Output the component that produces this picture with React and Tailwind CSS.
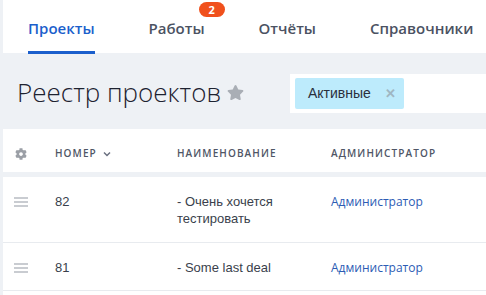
import React from "react";
import { FaStar, FaCog } from "react-icons/fa";

const tabs = [
  { label: "Проекты", active: true },
  { label: "Работы", badge: "2" },
  { label: "Отчёты" },
  { label: "Справочники" },
];

function Burger() {
  return (
    <div className="flex flex-col gap-[2px] w-[14px] pt-[4px]">
      <div className="h-[2px] bg-[#c9ccd1]" />
      <div className="h-[2px] bg-[#c9ccd1]" />
      <div className="h-[2px] bg-[#c9ccd1]" />
    </div>
  );
}

const arial = { fontFamily: '"Liberation Sans", Arial, sans-serif' };

export default function App() {
  return (
    <div className="w-[486px] h-[295px] overflow-hidden bg-[#eef1f5] pl-[3px]" style={{ fontFamily: '"Open Sans", sans-serif' }}>
      {/* tabs */}
      <div className="bg-white h-[53px] flex items-stretch pl-[25px] gap-[54px]">
        {tabs.map((t) => (
          <div key={t.label} className="relative flex flex-col justify-end">
            <div
              className={`text-[15px] font-semibold leading-[20px] pb-[13px] whitespace-nowrap ${
                t.active ? "text-[#1b5fcc]" : "text-[#4b5262]"
              }`}
            >
              {t.label}
            </div>
            {t.active ? <div className="h-[3px] bg-[#1b5fcc] mb-[-1px]" /> : <div className="h-[2px]" />}
            {t.badge && (
              <div className="absolute left-[50px] top-[2px] w-[26px] h-[15px] rounded-full bg-[#f0501c] text-white text-[11px] font-bold leading-[15px] text-center">
                {t.badge}
              </div>
            )}
          </div>
        ))}
      </div>

      {/* title row */}
      <div className="h-[76px] flex items-center">
        <div className="flex items-center pl-[14px] w-[287px]">
          <span className="text-[26px] font-light text-[#1d2230] leading-[34px] mt-[2px]">Реестр проектов</span>
          <FaStar className="ml-[6px] text-[#a9aeb5] w-[17px] h-[17px] mt-[2px]" />
        </div>
        <div className="flex-1 bg-white h-[39px] mt-[4px] flex items-center pl-[5px]">
          <div className="h-[31px] w-[109px] bg-[#bdebfc] rounded-[2px] flex items-center pl-[13px] pr-[8px] justify-between" style={arial}>
            <span className="text-[14px] text-[#2a2f3c]">Активные</span>
            <span className="text-[#9fb6c2] text-[13px] font-bold leading-none">✕</span>
          </div>
        </div>
      </div>

      {/* table */}
      <div className="bg-white">
        <div className="grid grid-cols-[52px_122px_154px_1fr] h-[48px] pt-[6px] items-center border-b-[5px] border-[#eef1f5]">
          <div className="pl-[12px]">
            <FaCog className="w-[12px] h-[12px] text-[#9b9fa6]" />
          </div>
          <div className="flex items-center gap-[6px] text-[10px] font-semibold tracking-[1.1px] text-[#4f5666]">
            НОМЕР
            <svg width="8" height="6" viewBox="0 0 8 6"><path d="M1 1.5 L4 4.5 L7 1.5" fill="none" stroke="#6a7080" strokeWidth="1.5" /></svg>
          </div>
          <div className="text-[10px] font-semibold tracking-[1.1px] text-[#4f5666]">НАИМЕНОВАНИЕ</div>
          <div className="text-[10px] font-semibold tracking-[1.1px] text-[#4f5666]">АДМИНИСТРАТОР</div>
        </div>

        <div className="grid grid-cols-[52px_122px_154px_1fr] h-[66px] pt-[16px] border-b border-[#e8ebef] items-start">
          <div className="pl-[11px]"><Burger /></div>
          <div className="text-[13px] text-[#3a3f4c] leading-[17px]" style={arial}>82</div>
          <div className="text-[13px] text-[#3a3f4c] leading-[17px]" style={arial}>
            - Очень хочется<br />тестировать
          </div>
          <div className="text-[12px] text-[#2c5cb4] leading-[17px]">Администратор</div>
        </div>

        <div className="grid grid-cols-[52px_122px_154px_1fr] h-[48px] pt-[16px] border-b border-[#e8ebef] items-start">
          <div className="pl-[11px]"><Burger /></div>
          <div className="text-[13px] text-[#3a3f4c] leading-[17px]" style={arial}>81</div>
          <div className="text-[13px] text-[#3a3f4c] leading-[17px]" style={arial}>- Some last deal</div>
          <div className="text-[12px] text-[#2c5cb4] leading-[17px]">Администратор</div>
        </div>
        <div className="h-[10px]" />
      </div>
    </div>
  );
}
